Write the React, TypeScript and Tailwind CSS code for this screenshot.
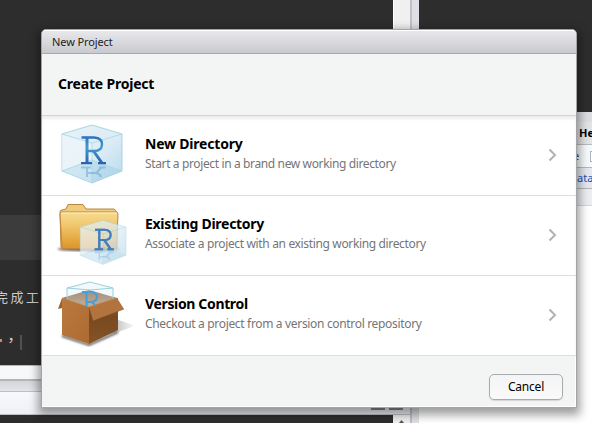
import React from "react";

function Cube({ id }: { id: string }) {
  return (
    <g strokeLinejoin="round">
      <defs>
        <linearGradient id={`${id}-face`} x1="0" y1="0" x2="1" y2="1">
          <stop offset="0" stopColor="#e6f3f9" />
          <stop offset=".55" stopColor="#dcecf5" />
          <stop offset="1" stopColor="#b7d9ec" />
        </linearGradient>
        <linearGradient id={`${id}-letter`} gradientUnits="userSpaceOnUse" x1="0" y1="12" x2="0" y2="40">
          <stop offset="0" stopColor="#2d6dba" />
          <stop offset=".4" stopColor="#419bd4" />
          <stop offset="1" stopColor="#2861ae" />
        </linearGradient>
      </defs>
      <path d="M31 1 61 10V47L31 59 1 47V10Z" fill={`url(#${id}-face)`} stroke="#a9d5df" />
      <path d="M31 20V36L1 47V10Z" fill="#f2f6fb" opacity=".6" />
      <path d="M31 36 61 47 31 59Z" fill="#a9d2e9" opacity=".55" />
      <path d="M31 36V59L1 47Z" fill="#bfe0f0" opacity=".5" />
      <path d="M1 10 31 19 61 10M31 19V59M1 47 31 36 61 47" fill="none" stroke="#a9d7df" strokeWidth=".8" />
      <g opacity=".4" stroke="#4d8fc7" fill="none" strokeWidth="2">
        <path d="M20 43.500H30M38 43.500H44.500M26 44V53M41 43 36 48M26 49H35Q39 49.500 40 53" />
      </g>
      <g fill="none" stroke={`url(#${id}-letter)`}>
        <path d="M26 14V39" strokeWidth="3" />
        <path d="M20.500 13.500H33Q41 14 41 20Q41 27 33 27H26" strokeWidth="2.400" />
        <path d="M32.500 27 41 39" strokeWidth="3" />
        <path d="M20 39.200H31M37 39.200H45" strokeWidth="2.200" />
      </g>
    </g>
  );
}

function DirectoryIcon() {
  return (
    <svg className="block h-20 w-[94px]" viewBox="0 0 94 80">
      <g transform="translate(19 8)"><Cube id="new" /></g>
    </svg>
  );
}

function FolderIcon() {
  return (
    <svg className="block h-20 w-[94px]" viewBox="0 0 94 80">
      <defs>
        <linearGradient id="folder" x1="0" y1="0" x2="0" y2="1">
          <stop stopColor="#f7dc91" /><stop offset=".4" stopColor="#efc46a" /><stop offset="1" stopColor="#de9427" />
        </linearGradient>
        <filter id="folder-shadow"><feGaussianBlur stdDeviation="1" /></filter>
      </defs>
      <ellipse cx="46.500" cy="53" rx="31" ry="2.500" fill="#77716b" filter="url(#folder-shadow)" />
      <path d="M19 51 18 16Q18 14 20 14L24 13 26 8.500H41L44 13H72Q74 14 75 17V52Z" fill="#efcb7b" stroke="#b88643" />
      <path d="M18 18Q18 16 20 16H74Q76 16 76 18L74.500 52.500H20Z" fill="url(#folder)" stroke="#bd8546" />
      <path d="M19 17H75" stroke="#fff0b7" />
      <g transform="translate(37.500 23.500) scale(.76)">
        <g opacity=".72"><Cube id="existing" /></g>
        <g fill="none" stroke="#427fc0" strokeWidth="2.800">
          <path d="M26 14V39M20.500 13.500H33Q41 14 41 20Q41 27 33 27H26M32.500 27 41 39M20 39.200H31M37 39.200H45" />
        </g>
      </g>
    </svg>
  );
}

function BoxIcon() {
  return (
    <svg className="block h-20 w-[94px]" viewBox="0 0 94 80">
      <defs>
        <linearGradient id="box-left" x1="0" y1="0" x2="1" y2="1"><stop stopColor="#ba793e" /><stop offset="1" stopColor="#ad6b32" /></linearGradient>
        <linearGradient id="box-right" x1="0" y1="0" x2="0" y2="1"><stop stopColor="#9a6537" /><stop offset=".4" stopColor="#78491f" /><stop offset="1" stopColor="#855428" /></linearGradient>
        <linearGradient id="box-back" x1="0" y1="0" x2="0" y2="1"><stop stopColor="#8a6142" /><stop offset="1" stopColor="#cba27b" /></linearGradient>
        <linearGradient id="ground" x1="0" y1="0" x2="1" y2="0"><stop offset=".4" stopColor="#777" stopOpacity=".7" /><stop offset="1" stopColor="#aaa" stopOpacity=".15" /></linearGradient>
        <filter id="box-shadow"><feGaussianBlur stdDeviation="1" /></filter>
      </defs>
      <path d="M62 39 91 49 90 51 76 56 48 63Z" fill="url(#ground)" />
      <path d="M20 60 47 69 76 56" fill="none" stroke="#555" strokeWidth="2" filter="url(#box-shadow)" />
      <path d="M20 22 47 14 75 22 47 36Z" fill="url(#box-back)" />
      <path d="M25 12 48 6 71 12V23L47 31 25 25Z" fill="#d8edf5" opacity=".32" />
      <path d="M25 12 48 6 71 12V23M25 23V12L48 14 71 12" fill="none" stroke="#9bd1d8" />
      <path d="M20 22 47 31V68L20 59Z" fill="url(#box-left)" />
      <path d="M47 31 76 22V54L47 68Z" fill="url(#box-right)" />
      <path d="M20 22 16 33 20 32Z" fill="#9a6232" />
      <path d="M47 31 75 22 82 33 51 45Z" fill="#b2733e" />
      <path d="M47 32 51 45 82 33" fill="none" stroke="#7b4c27" opacity=".5" />
      <path d="M20 22 47 31 75 22" fill="none" stroke="#c28a52" strokeWidth=".7" />
      <path d="M40 16H49Q55 16.500 55 21T49 26H44M44.500 16V31M50 26 53 29" fill="none" stroke="#4aa0d2" strokeWidth="2.200" />
    </svg>
  );
}

function ProjectChoice({ title, text, icon, titleClass, textClass }: {
  title: string; text: string; icon: React.ReactNode; titleClass: string; textClass: string;
}) {
  return (
    <div className="flex h-20 shrink-0 border-b border-[#dedede]">
      <div className="w-[103px] shrink-0">{icon}</div>
      <div className="flex-1 pt-[18px] whitespace-nowrap">
        <div className={`text-[14px] leading-5 font-bold text-black ${titleClass}`}>{title}</div>
        <div className={`pt-px text-[12px] leading-[18px] text-[#757575] ${textClass}`}>{text}</div>
      </div>
      <svg className="mt-[31px] mr-[19px] h-4 w-[9px] shrink-0" viewBox="0 0 9 16"><path d="M1.500 2.500 7 8l-5.500 5.500" fill="none" stroke="#b1b1b1" strokeWidth="2" /></svg>
    </div>
  );
}

export default function App() {
  return (
    <main className="relative flex h-[423px] w-[592px] overflow-hidden bg-white font-['Noto_Sans','Noto_Sans_CJK_TC',sans-serif]">
      <section className="flex w-[410px] shrink-0 flex-col">
        <div className="flex h-[365px] shrink-0">
          <div className="flex w-[393px] flex-col bg-[#2d2d2d] text-[14px] text-[#cccccc]">
            <div className="h-[215px]" />
            <div className="h-[45px] bg-[#3c3c3c]" />
            <div className="flex h-[55px] items-center pt-[18px]">
              <span className="-ml-[5px] font-['Noto_Sans_CJK_TC',sans-serif] text-[13px] tracking-[2.5px] whitespace-nowrap">完成工</span>
            </div>
            <div className="flex pt-5">
              <span className="mt-[4px] h-[3px] w-[2px] bg-[#df8060]" />
              <span className="ml-px -mt-[7px] w-[17px] text-[16px]">，</span>
              <span className="h-[15px] w-[2px] bg-[#515151]" />
            </div>
          </div>
          <div className="w-[17px] border-l border-white bg-[#f0f0f0]" />
        </div>
        <div className="h-[16px] shrink-0 border-t border-b-2 border-t-[#b8b8b8] border-b-[#b5b5b7] bg-[#f7f8f9]" />
        <div className="h-[10px] shrink-0 bg-linear-to-b from-[#d5d6dc] to-[#e3e4ea]" />
        <div className="flex h-[24px] shrink-0 items-start justify-end gap-1 border-t border-b border-[#bfc0c5] bg-linear-to-b from-[#f8f9fc] to-[#eff0f5] pt-4 pr-[7px]">
          <div className="h-[2px] w-[14px] bg-[#85878c]" /><div className="h-[2px] w-[14px] bg-[#85878c]" />
        </div>
        <div className="flex flex-1 bg-[#2d2d2d]">
          <div className="flex-1" />
          <div className="flex w-[17px] items-end justify-center bg-[#f0f0f0]">
            <svg className="h-[3px] w-[5px]" viewBox="0 0 5 3"><path d="M2.500 0 5 3H0Z" fill="#555" /></svg>
          </div>
        </div>
      </section>
      <div className="w-[9px] shrink-0 border-l-2 border-[#c0c1c5] bg-[#dfe0e5]" />
      <section className="flex flex-1 flex-col">
        <div className="h-[112px] bg-[#2d2d2d]" />
        <div className="h-[10px] bg-[#dcdde3]" />
        <div className="flex h-[23px] items-center border-b border-[#b9babd] bg-[#e2e3e5] pl-[160px] text-[11px] font-bold text-black">Help</div>
        <div className="flex h-[23px] items-center border-b border-[#b4b7bf] bg-[#f7fafc] pl-[154px] text-[11px] text-[#234155]">e<div className="ml-[11px] h-[11px] w-2 border border-[#aab2bd] bg-white" /></div>
        <div className="h-[21px] border-b border-[#b4b5b7] bg-[#e4e8f0] pl-[158px] text-[11px] leading-5 text-[#2450b5]">ata</div>
        <div className="h-[17px] border-b border-[#d6d6d8] bg-[#ecedf0]" />
      </section>
      <div className="absolute top-[29px] left-[41px] flex h-[379px] w-[536px] flex-col overflow-hidden rounded-t-[5px] border border-[#a1a5a7] bg-white shadow-[0_4px_10px_3px_rgba(0,0,0,0.38)]">
        <header className="h-6 shrink-0 border-t border-b border-t-white border-b-[#a9aaad] bg-linear-to-b from-[#e8e8eb] to-[#c9cacf] pl-[10px] text-[11px] leading-[22px] text-[#222]">
          <span className="tracking-[-0.1px]">New Project</span>
        </header>
        <div className="flex h-[62px] shrink-0 items-center border-b border-[#d2d5d5] bg-[#f3f5f4] pb-[2px] pl-4 text-[14px] font-bold text-black"><span className="tracking-[-0.2px]">Create Project</span></div>
        <div className="h-[240px] shrink-0 bg-white shadow-[inset_0_3px_3px_#eeeeee]">
          <ProjectChoice title="New Directory" text="Start a project in a brand new working directory" icon={<DirectoryIcon />} titleClass="tracking-[-0.2px]" textClass="tracking-[-0.37px]" />
          <ProjectChoice title="Existing Directory" text="Associate a project with an existing working directory" icon={<FolderIcon />} titleClass="tracking-[-0.28px]" textClass="tracking-[-0.35px]" />
          <ProjectChoice title="Version Control" text="Checkout a project from a version control repository" icon={<BoxIcon />} titleClass="tracking-[-0.35px]" textClass="tracking-[-0.33px]" />
        </div>
        <footer className="flex flex-1 items-start justify-end border-r border-b border-white bg-[#f3f5f4] pt-[18px] pr-3">
          <button className="h-[26px] w-[74px] rounded-[5px] border border-[#a8abad] bg-linear-to-b from-[#f4f4f7] to-[#fafafa] text-[12px] leading-6 tracking-[-0.2px] text-black shadow-[0_1px_1px_#d5d5d5]">Cancel</button>
        </footer>
      </div>
    </main>
  );
}
